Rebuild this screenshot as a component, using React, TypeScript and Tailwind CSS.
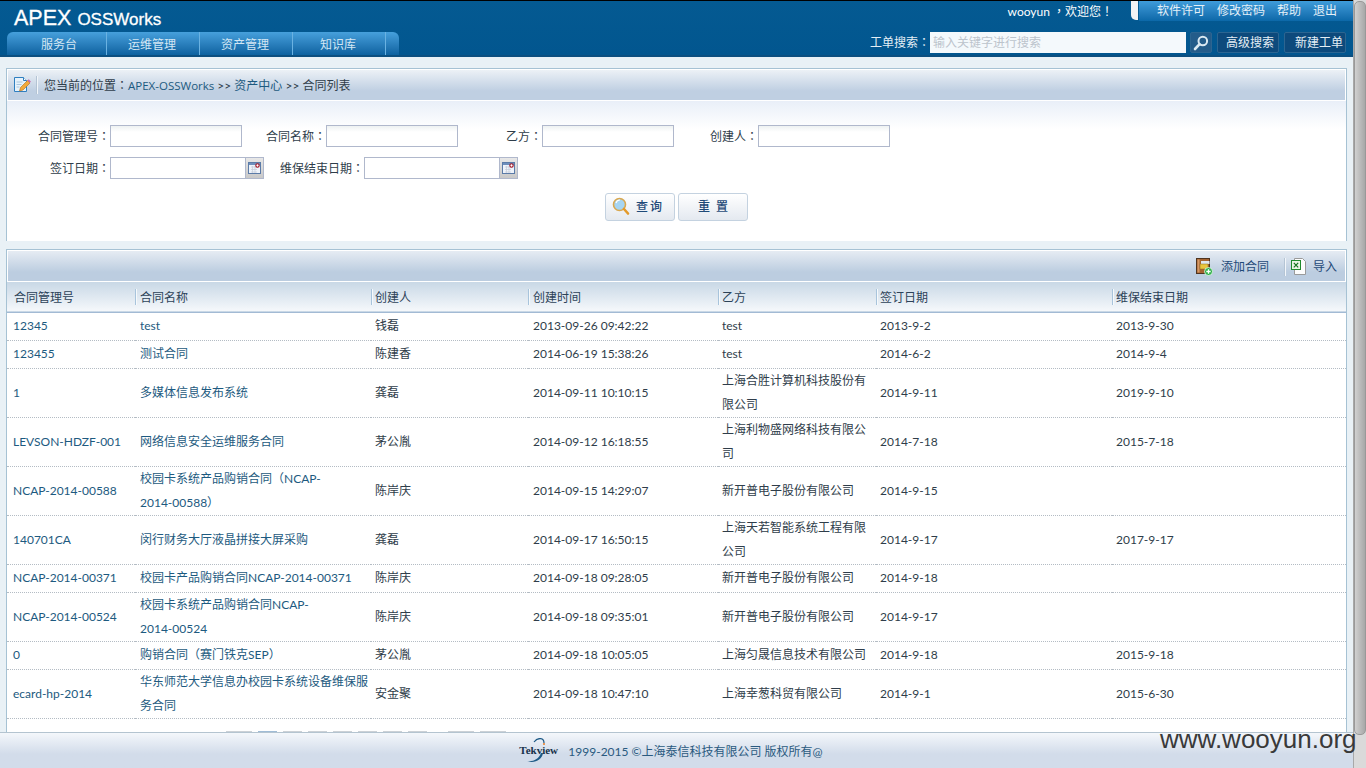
import React from 'react';

const FONT = "font-['Lato','Noto_Sans_CJK_SC',sans-serif]";

const rows = [
  { no: '12345', name: 'test', by: '钱磊', at: '2013-09-26 09:42:22', party: 'test', sign: '2013-9-2', end: '2013-9-30' },
  { no: '123455', name: '测试合同', by: '陈建香', at: '2014-06-19 15:38:26', party: 'test', sign: '2014-6-2', end: '2014-9-4' },
  { no: '1', name: '多媒体信息发布系统', by: '龚磊', at: '2014-09-11 10:10:15', party: '上海合胜计算机科技股份有\n限公司', sign: '2014-9-11', end: '2019-9-10' },
  { no: 'LEVSON-HDZF-001', name: '网络信息安全运维服务合同', by: '茅公胤', at: '2014-09-12 16:18:55', party: '上海利物盛网络科技有限公\n司', sign: '2014-7-18', end: '2015-7-18' },
  { no: 'NCAP-2014-00588', name: '校园卡系统产品购销合同（NCAP-\n2014-00588）', by: '陈岸庆', at: '2014-09-15 14:29:07', party: '新开普电子股份有限公司', sign: '2014-9-15', end: '' },
  { no: '140701CA', name: '闵行财务大厅液晶拼接大屏采购', by: '龚磊', at: '2014-09-17 16:50:15', party: '上海天若智能系统工程有限\n公司', sign: '2014-9-17', end: '2017-9-17' },
  { no: 'NCAP-2014-00371', name: '校园卡产品购销合同NCAP-2014-00371', by: '陈岸庆', at: '2014-09-18 09:28:05', party: '新开普电子股份有限公司', sign: '2014-9-18', end: '' },
  { no: 'NCAP-2014-00524', name: '校园卡系统产品购销合同NCAP-\n2014-00524', by: '陈岸庆', at: '2014-09-18 09:35:01', party: '新开普电子股份有限公司', sign: '2014-9-17', end: '' },
  { no: '0', name: '购销合同（赛门铁克SEP）', by: '茅公胤', at: '2014-09-18 10:05:05', party: '上海匀晟信息技术有限公司', sign: '2014-9-18', end: '2015-9-18' },
  { no: 'ecard-hp-2014', name: '华东师范大学信息办校园卡系统设备维保服\n务合同', by: '安金聚', at: '2014-09-18 10:47:10', party: '上海幸葱科贸有限公司', sign: '2014-9-1', end: '2015-6-30' },
];

// the TC cut centres full-width punctuation in its box, like the reference
const Punct = ({ children }: { children: string }) => (
  <span className="font-['Noto_Sans_CJK_TC',sans-serif]">{children}</span>
);

const CalendarIcon = () => (
  <svg width="13" height="14" viewBox="0 0 13 14">
    <rect x="0.5" y="1.5" width="12" height="11" fill="#eef3fa" stroke="#5b7ba8" />
    <rect x="1" y="2" width="11" height="2" fill="#6e8fbc" />
    <path d="M3 6h6M3 8.5h6M3 11h6M4.5 5v7M7 5v7" stroke="#c4ccd8" strokeWidth="0.7" />
    <circle cx="9.5" cy="4.5" r="1.7" fill="#fff" stroke="#a01020" strokeWidth="1.1" />
  </svg>
);

const NoteIcon = () => (
  <svg width="18" height="18" viewBox="0 0 18 18">
    <path d="M1.5 1.5h9l3 3v11h-12z" fill="#e6f2fb" stroke="#2f7fc0" />
    <path d="M10.5 1.5v3h3" fill="#fff" stroke="#2f7fc0" />
    <path d="M3.5 6h6M3.5 8.5h5M3.5 11h3" stroke="#a9c6de" />
    <path d="M6.5 15l1-3.5 7-7 2.5 2.5-7 7z" fill="#f2a93b" stroke="#b5701a" strokeWidth="0.6" />
    <path d="M14.5 4.5l1.2-1.2 2.2 2.2-1 1.2z" fill="#c86cb0" />
  </svg>
);

const BookAddIcon = () => (
  <svg width="17" height="18" viewBox="0 0 17 18">
    <rect x="0.5" y="0.5" width="13" height="15" fill="#a4622f" stroke="#4e3420" />
    <rect x="1.5" y="1.5" width="2" height="13" fill="#d59a68" />
    <rect x="5" y="3" width="8.5" height="3" fill="#dfe7ef" />
    <rect x="4" y="6" width="8" height="5" fill="#e9c53e" stroke="#8c6c1a" strokeWidth="0.5" />
    <circle cx="12.5" cy="13.5" r="4" fill="#2fb24a" stroke="#fff" strokeWidth="0.7" />
    <path d="M10.3 13.5h4.4M12.5 11.3v4.4" stroke="#fff" strokeWidth="1.3" />
  </svg>
);

const ExcelIcon = () => (
  <svg width="15" height="17" viewBox="0 0 15 17">
    <path d="M3.5 0.5h8l3 3v13h-11z" fill="#fdfdfd" stroke="#9a9a9a" />
    <rect x="0.5" y="2.5" width="9" height="9" fill="#e9f4e5" stroke="#1f8a2c" />
    <path d="M2.8 4.8l4.4 4.6M7.2 4.8l-4.4 4.6" stroke="#14731f" strokeWidth="1.2" />
  </svg>
);

const SearchIcon = () => (
  <svg width="16" height="16" viewBox="0 0 16 16">
    <circle cx="9.8" cy="6" r="4.3" fill="none" stroke="#dbe9f2" strokeWidth="2" />
    <path d="M6.6 9.2L2 14" stroke="#dbe9f2" strokeWidth="2.6" strokeLinecap="round" />
  </svg>
);

const LoupeIcon = () => (
  <svg width="18" height="19" viewBox="0 0 18 19">
    <circle cx="7.5" cy="7.5" r="6" fill="#a6d5f2" stroke="#d9a850" strokeWidth="1.6" />
    <path d="M4 6a4 4 0 0 1 4-3" stroke="#fff" strokeWidth="1.2" fill="none" />
    <path d="M12 12l4 4.5" stroke="#e39a2a" strokeWidth="2.6" strokeLinecap="round" />
  </svg>
);

const TekviewLogo = () => (
  <div className="relative w-[40px] h-[26px] shrink-0">
    <svg width="40" height="26" viewBox="0 0 40 26" className="absolute inset-0">
      <path d="M15 4C19 -1 25 -0.5 25 5" fill="none" stroke="#1d5a86" strokeWidth="1.2" />
      <path d="M24 15C23 22 15 26 8 23C14 24 20 21 22 15z" fill="#1d5a86" />
      <circle cx="25" cy="6" r="1" fill="#e87b20" />
    </svg>
    <span className="absolute left-0 top-[5px] font-['Liberation_Serif',serif] font-bold text-[11px] leading-[14px] text-[#17324a]">Tekview</span>
  </div>
);

const Field = ({ label, labelW }: { label: string; labelW: string }) => (
  <div className="flex items-center">
    <span className={`${labelW} text-right`}>{label}<Punct>：</Punct></span>
    <input className="w-[132px] h-[22px] border border-[#b0b8cc] bg-gradient-to-b from-[#eef2f2] to-white to-30%" />
  </div>
);

const DateField = ({ label, labelW }: { label: string; labelW: string }) => (
  <div className="flex items-center">
    <span className={`${labelW} text-right`}>{label}<Punct>：</Punct></span>
    <input className="w-[136px] h-[22px] border border-[#b0b8cc] bg-white" />
    <span className="w-[18px] h-[22px] border border-l-0 border-[#b0b8cc] bg-gradient-to-b from-[#e8e8e8] to-[#c8c8c8] flex items-center justify-center">
      <CalendarIcon />
    </span>
  </div>
);

const columns = [
  { title: '合同管理号', width: 'w-[128px]', pad: 'pl-[7px]' },
  { title: '合同名称', width: 'w-[236px]', pad: 'pl-[5px]' },
  { title: '创建人', width: 'w-[157px]', pad: 'pl-[4px]' },
  { title: '创建时间', width: 'w-[190px]', pad: 'pl-[5px]' },
  { title: '乙方', width: 'w-[158px]', pad: 'pl-[4px]' },
  { title: '签订日期', width: 'w-[236px]', pad: 'pl-[4px]' },
  { title: '维保结束日期', width: 'w-[234px]', pad: 'pl-[4px]' },
];

const tab = 'h-full flex items-center pt-[3px] bg-gradient-to-b from-[#46a0dc] to-[#0c62a0]';
const cell = 'border-b border-dotted border-[#b4bcc4] align-middle whitespace-pre-line leading-6 p-0';

export default function App() {
  return (
    <div className={`relative flex w-full h-screen overflow-hidden text-xs text-[#2f3d4a] ${FONT}`}>
      <div className="flex flex-col flex-1 min-w-0 h-full bg-[#e9f1f6]">
        {/* Header */}
        <header className="shrink-0 h-[57px] flex justify-between border-t border-black bg-gradient-to-b from-[#045a92] to-[#02568f] border-b-2 border-b-[#0c4f80]">
          <div className="flex flex-col pl-[7px]">
            <div className="h-[32px] pl-[7px] pt-[5px] text-white leading-6 flex items-baseline font-['Liberation_Sans',sans-serif] [-webkit-text-stroke:0.3px_#fff]">
              <span className="text-[21.5px]">APEX</span>
              <span className="text-[17px] ml-[6px]">OSSWorks</span>
            </div>
            <nav className="flex h-[23px] text-[#d4e7f4]">
              <a className={`${tab} w-[99px] pl-[34px] rounded-tl-[6px]`}>服务台</a>
              <a className={`${tab} w-[93px] pl-[21px] border-l border-[#6ab2e2]`}>运维管理</a>
              <a className={`${tab} w-[93px] pl-[21px] border-l border-[#6ab2e2]`}>资产管理</a>
              <a className={`${tab} w-[93px] pl-[27px] border-l border-[#6ab2e2]`}>知识库</a>
              <a className={`${tab} w-[14px] border-l border-[#6ab2e2] rounded-tr-[6px]`}></a>
            </nav>
          </div>
          <div className="flex flex-col items-end">
            <div className="flex h-[20px]">
              <span className="text-white leading-[19px] mr-[18px]">wooyun <Punct>，</Punct>欢迎您<Punct>！</Punct></span>
              <span className="w-[7px] h-[19px] bg-[#f1f3f5] rounded-bl-[5px]"></span>
              <div className="w-[214px] h-[20px] ml-px pl-[18px] flex gap-3 items-center bg-gradient-to-b from-[#3e9cda] to-[#0b68a8] text-[#e4f0f8]">
                <a>软件许可</a>
                <a>修改密码</a>
                <a>帮助</a>
                <a>退出</a>
              </div>
            </div>
            <div className="flex items-center mt-[11px] pr-[7px] text-[#e4eef5]">
              <span>工单搜索<Punct>：</Punct></span>
              <input
                placeholder="输入关键字进行搜索"
                className="w-[256px] h-[21px] px-[3px] bg-[#f4f9fc] text-xs placeholder:text-[#bcc4cc]"
              />
              <button className="w-[22px] h-[21px] ml-[4px] rounded-[2px] bg-[#245c8a] border border-[#2c6591] flex items-center justify-center">
                <SearchIcon />
              </button>
              <button className="w-[62px] h-[21px] ml-[5px] rounded-[2px] bg-[#0d4a7c] border border-[#2c6591] pl-[8px] text-left">高级搜索</button>
              <button className="w-[62px] h-[21px] ml-[5px] rounded-[2px] bg-[#0d4a7c] border border-[#2c6591] pl-[10px] text-left">新建工单</button>
            </div>
          </div>
        </header>

        {/* Content */}
        <main className="flex-1 min-h-0 overflow-hidden px-[6px] pt-[11px]">
          <section className="h-[173px] border border-[#a6c2d4] bg-white">
            <div className="h-[30px] mt-px mx-px flex items-center bg-gradient-to-b from-[#ecf1f6] to-[#bfcfe2] to-70%">
              <span className="w-[24px] flex justify-center pl-[3px]"><NoteIcon /></span>
              <span className="h-[18px] w-[2px] bg-[#f2f6fa] border-l border-[#b4c4d4] ml-[4px] mr-[6px]"></span>
              <span>您当前的位置<Punct>：</Punct><a className="text-[#1d5a80] text-[11.5px] font-['Open_Sans',sans-serif]">APEX-OSSWorks</a> &gt;&gt; <a className="text-[#1d5a80]">资产中心</a> &gt;&gt; 合同列表</span>
            </div>
            <div className="mt-px h-[140px] bg-gradient-to-b from-[#e9eff8] to-white to-20%">
              <div className="pl-[19px] pt-[24px] flex flex-col gap-[10px]">
                <div className="flex">
                  <Field label="合同管理号" labelW="w-[84px]" />
                  <Field label="合同名称" labelW="w-[84px]" />
                  <Field label="乙方" labelW="w-[84px]" />
                  <Field label="创建人" labelW="w-[84px]" />
                </div>
                <div className="flex">
                  <DateField label="签订日期" labelW="w-[84px]" />
                  <DateField label="维保结束日期" labelW="w-[100px]" />
                </div>
              </div>
              <div className="flex justify-center gap-[3px] mt-[14px] text-[#1f4a78] font-medium">
                <button className="relative w-[70px] h-[28px] rounded-[3px] border border-[#c4d2e0] bg-gradient-to-b from-white to-[#e4e9f0] pl-[20px] tracking-[2px]">
                  <span className="absolute left-[6px] top-[3px]"><LoupeIcon /></span>
                  查询
                </button>
                <button className="w-[70px] h-[28px] rounded-[3px] border border-[#c4d2e0] bg-gradient-to-b from-white to-[#e4e9f0] tracking-[6px] pl-[6px]">
                  重置
                </button>
              </div>
            </div>
          </section>

          <section className="mt-[8px] h-[500px] border border-[#a6c2d4] bg-white overflow-hidden">
            <div className="h-[30px] mx-px mt-px pt-px flex items-center justify-end bg-gradient-to-b from-[#e6ecf3] to-[#bccde0] to-70% text-[#1f4a78] pr-[8px]">
              <BookAddIcon />
              <span className="ml-[8px]">添加合同</span>
              <span className="h-[18px] w-[2px] bg-[#f2f6fa] border-l border-[#b4c4d4] ml-[15px] mr-[5px]"></span>
              <ExcelIcon />
              <span className="ml-[7px]">导入</span>
            </div>
            <table className="w-[1339px] mt-px table-fixed">
              <colgroup>
                {columns.map((c) => <col key={c.title} className={c.width} />)}
              </colgroup>
              <thead>
                <tr className="h-[30px] bg-gradient-to-b from-[#c9d8e6] to-[#f5f8fb] border-b border-[#a2bad4]">
                  {columns.map((c, i) => (
                    <th key={c.title} className={`relative font-normal text-left p-0 pt-[2px] ${c.pad} text-[#2c4258]`}>
                      {i > 0 && <span className="absolute left-0 top-[7px] h-[16px] w-[2px] bg-[#f6f9fb] border-l border-[#a8c4dc]"></span>}
                      {c.title}
                    </th>
                  ))}
                </tr>
              </thead>
              <tbody>
                {rows.map((r) => (
                  <tr key={r.at} className="h-[28px]">
                    <td className={`${cell} pl-[6px] text-[#1d5a80]`}>{r.no}</td>
                    <td className={`${cell} pl-[5px] text-[#1d5a80]`}>{r.name}</td>
                    <td className={`${cell} pl-[4px]`}>{r.by}</td>
                    <td className={`${cell} pl-[5px]`}>{r.at}</td>
                    <td className={`${cell} pl-[4px]`}>{r.party}</td>
                    <td className={`${cell} pl-[4px]`}>{r.sign}</td>
                    <td className={`${cell} pl-[4px]`}>{r.end}</td>
                  </tr>
                ))}
              </tbody>
            </table>
            {/* pager, cut off by the footer */}
            <div className="flex mt-[12px] pl-[219px]">
              <span className="w-[26px] h-[20px] bg-[#ccd1d6]"></span>
              <span className="w-[19px] h-[20px] ml-[6px] bg-[#a0bcd6]"></span>
              <span className="w-[19px] h-[20px] ml-[6px] bg-[#ccd1d6]"></span>
              <span className="w-[19px] h-[20px] ml-[6px] bg-[#ccd1d6]"></span>
              <span className="w-[19px] h-[20px] ml-[6px] bg-[#ccd1d6]"></span>
              <span className="w-[19px] h-[20px] ml-[6px] bg-[#ccd1d6]"></span>
              <span className="w-[19px] h-[20px] ml-[6px] bg-[#ccd1d6]"></span>
              <span className="w-[19px] h-[20px] ml-[6px] bg-[#ccd1d6]"></span>
              <span className="w-[26px] h-[20px] ml-[21px] bg-[#ccd1d6]"></span>
              <span className="w-[26px] h-[20px] ml-[6px] bg-[#ccd1d6]"></span>
            </div>
          </section>
        </main>

        {/* Footer */}
        <footer className="shrink-0 h-[36px] border-t border-[#b4c4d0] bg-gradient-to-b from-[#f4f7fb] to-[#d2dcea] to-60% flex items-center justify-center pr-[11px] text-[#2a5a80]">
          <TekviewLogo />
          <span className="ml-[9px] pt-[2px]">1999-2015 ©上海泰信科技有限公司 版权所有@</span>
        </footer>
      </div>

      {/* Scrollbar */}
      <div className="shrink-0 w-[13px] h-full bg-[#dadada] border-l border-[#a8a8a8]">
        <div className="h-[734px] mt-px rounded-[5px] bg-gradient-to-r from-[#d0d0d0] to-[#a8a8a8] border border-[#999]"></div>
      </div>

      {/* Watermark */}
      <span className="absolute left-[1160px] top-[724px] font-['Liberation_Sans',sans-serif] text-[26px] leading-[30px] text-[#3a3a3a]">www.wooyun.org</span>
    </div>
  );
}
